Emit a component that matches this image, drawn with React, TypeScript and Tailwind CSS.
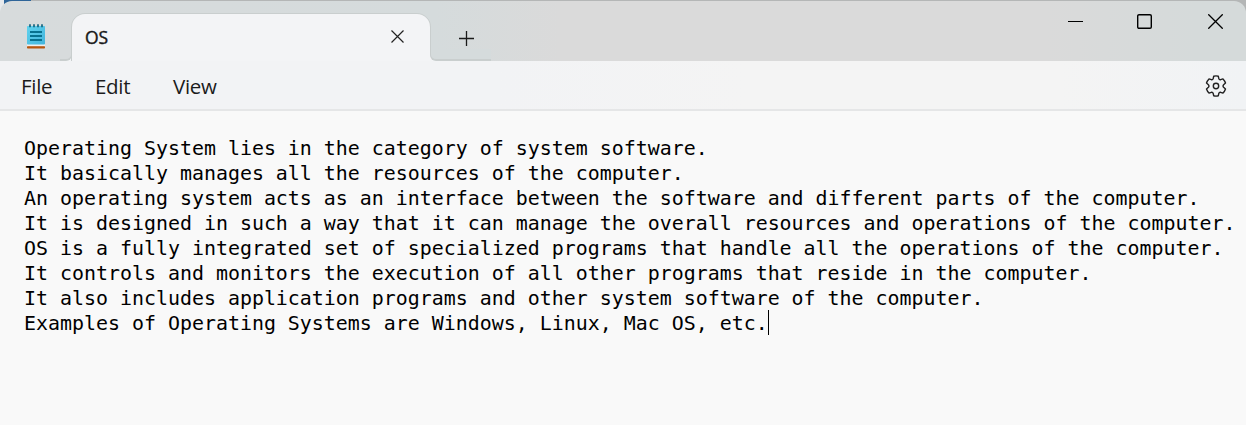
const lines = [
  "Operating System lies in the category of system software.",
  "It basically manages all the resources of the computer.",
  "An operating system acts as an interface between the software and different parts of the computer.",
  "It is designed in such a way that it can manage the overall resources and operations of the computer.",
  "OS is a fully integrated set of specialized programs that handle all the operations of the computer.",
  "It controls and monitors the execution of all other programs that reside in the computer.",
  "It also includes application programs and other system software of the computer.",
  "Examples of Operating Systems are Windows, Linux, Mac OS, etc.",
];

function NotepadIcon() {
  return (
    <svg width="18" height="25" viewBox="0 0 18 25">
      <defs>
        <linearGradient id="page" x1="0" y1="0" x2="1" y2="1">
          <stop offset="0" stopColor="#62d3ee" />
          <stop offset="1" stopColor="#42b4dc" />
        </linearGradient>
      </defs>
      <rect x="0" y="22" width="18" height="2.6" rx="0.8" fill="#b8560f" />
      <rect x="0" y="20" width="18" height="2.2" fill="#eef0f0" />
      <rect x="0" y="2" width="18" height="18.6" rx="0.8" fill="url(#page)" />
      <path d="M3 0.3v3M7 0.3v3M11 0.3v3M15 0.3v3" stroke="#15647f" strokeWidth="1.7" />
      <path d="M3 8h12M3 12h12M3 16h12" stroke="#08718f" strokeWidth="2" />
    </svg>
  );
}

function GearIcon() {
  return (
    <svg width="22" height="22" viewBox="0 0 22 22" fill="none" stroke="#222" strokeWidth="1.4" strokeLinejoin="round">
      <path d="M8.7 1.2Q11 .6 13.3 1.2L13.8 3.6Q14.2 4.9 15.6 4.7L18 3.9Q19.7 5.6 20.5 8L18.6 9.7Q17.5 11 18.6 12.3L20.5 14Q19.7 16.4 18 18.1L15.6 17.3Q14.2 17.1 13.8 18.4L13.3 20.8Q11 21.4 8.7 20.8L8.2 18.4Q7.8 17.1 6.4 17.3L4 18.1Q2.3 16.4 1.5 14L3.4 12.3Q4.5 11 3.4 9.7L1.5 8Q2.3 5.6 4 3.9L6.4 4.7Q7.8 4.9 8.2 3.6Z" />
      <circle cx="11" cy="11" r="2.7" />
    </svg>
  );
}

export default function App() {
  return (
    <div className="flex h-[425px] w-[1246px] flex-col overflow-hidden bg-[#f9f9f9]">
      <div className="h-[61px] shrink-0 bg-[linear-gradient(90deg,#e8eaec_0_4px,#2f6599_4px_31px,#b4b6b6_31px)] pt-px">
        <header className="flex h-[60px] rounded-t-[12px] bg-[linear-gradient(90deg,#d7dbdc_0%,#d5dbdc_35%,#dadada_45%,#dadada_84%,#d5dada_96%)]">
          <div className="flex w-[60px] pl-[27px] pt-[23px]">
            <NotepadIcon />
          </div>
          <div className="flex w-3 flex-col justify-end">
            <div className="h-[12px] bg-[#f3f4f6]">
              <div className="h-full rounded-br-[6px] border-b-2 border-r border-[#c9cece] bg-[#d7dbdc]" />
            </div>
          </div>
          <div className="mt-[13px] flex w-[358px] justify-between rounded-t-[13px] bg-[#f3f4f6] pl-[13px] pr-[26px] shadow-[0_-1px_0_#c9cece,-1px_0_0_#c9cece,1px_0_0_#c9cece]">
            <span className="pt-[11px] font-['Open_Sans',sans-serif] text-[17.5px] leading-6 text-[#191919] [-webkit-text-stroke:0.4px_#191919]">OS</span>
            <svg className="mt-[16px]" width="13" height="13" viewBox="0 0 13 13" stroke="#222" strokeWidth="1.2">
              <path d="M.5.5l12 12M12.5.5l-12 12" />
            </svg>
          </div>
          <div className="flex w-[61px] flex-col justify-between">
            <svg className="ml-[29px] mt-[30px]" width="15" height="15" viewBox="0 0 15 15" stroke="#1a1a1a" strokeWidth="1.3">
              <path d="M7.5 0v15M0 7.5h15" />
            </svg>
            <div className="h-[12px] bg-[#f3f4f6]">
              <div className="h-full rounded-bl-[6px] border-b-2 border-l border-[#c9cece] bg-[#d5dbdc]" />
            </div>
          </div>
          <div className="flex flex-1 justify-end pr-[23px] pt-[13px] text-black">
            <svg className="mr-[54px]" width="15" height="15" viewBox="0 0 15 15" stroke="currentColor">
              <path d="M0 7.5h15" />
            </svg>
            <svg className="mr-[56px]" width="15" height="15" viewBox="0 0 15 15" fill="none" stroke="currentColor" strokeWidth="1.4">
              <rect x=".7" y=".7" width="13.6" height="13.6" rx="1.3" />
            </svg>
            <svg width="15" height="15" viewBox="0 0 15 15" stroke="currentColor" strokeWidth="1.3">
              <path d="M.3.3l14.4 14.4M14.7.3L.3 14.7" />
            </svg>
          </div>
        </header>
      </div>
      <nav className="flex h-[50px] shrink-0 items-center border-b-2 border-[#e5e6e7] bg-[linear-gradient(90deg,#f2f3f5_0%,#f2f3f5_40%,#f4f4f4_60%,#f4f4f4_85%,#f1f3f5_100%)] pl-[21px] pr-[19px] pt-[3px] font-['Open_Sans',sans-serif] text-[20.5px] tracking-[-0.3px] text-[#1b1b1b]">
        <span className="w-[74px]">File</span>
        <span className="w-[78px]">Edit</span>
        <span>View</span>
        <span className="mb-[2px] ml-auto">
          <GearIcon />
        </span>
      </nav>
      <main className="flex flex-col pl-[24px] pt-[25px] font-['DejaVu_Sans_Mono',monospace] text-[19.93px] leading-[25px] text-black">
        {lines.map((line, i) => (
          <div key={line} className="flex h-[25px] whitespace-pre">
            <span>{line}</span>
            {i === lines.length - 1 && <span className="mt-[-1px] h-[25px] w-px bg-black" />}
          </div>
        ))}
      </main>
    </div>
  );
}
